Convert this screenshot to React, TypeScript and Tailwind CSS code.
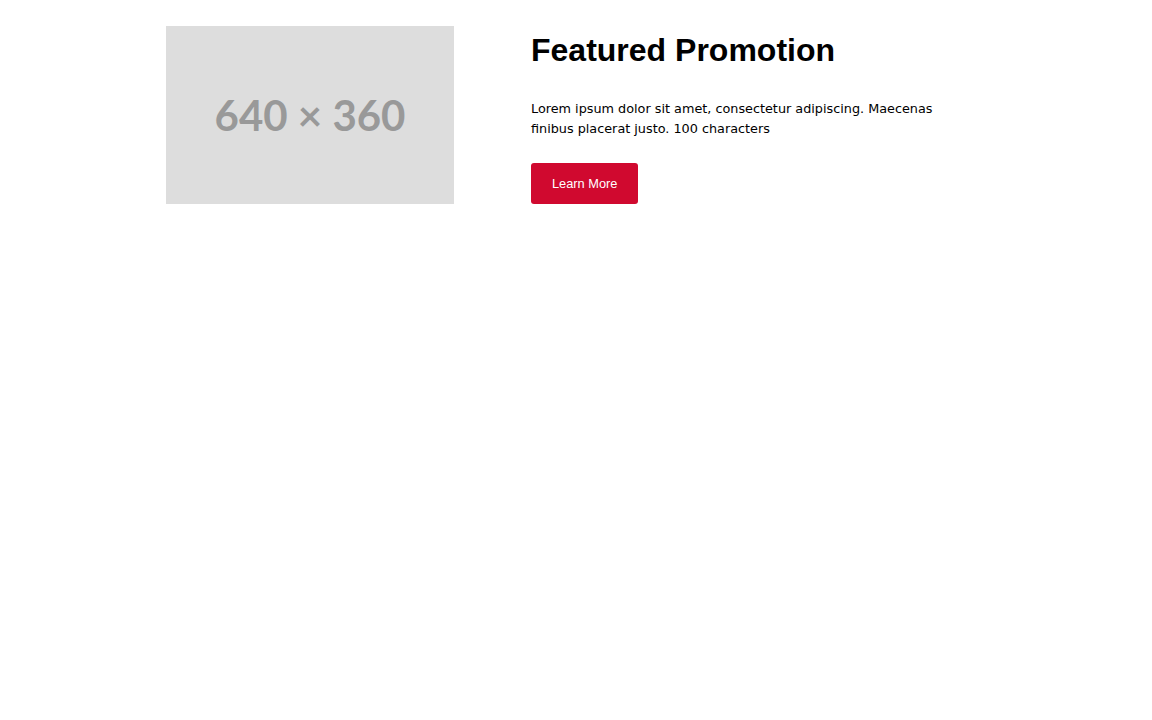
export default function App() {
  return (
    <div className="min-h-[720px] w-full bg-white">
      <div className="mx-auto flex w-[820px] items-start pt-[26px]">
        {/* Placeholder image */}
        <div className="flex h-[178px] w-[288px] shrink-0 items-center justify-center bg-[#dddddd]">
          <span className="font-['Lato','Liberation_Sans',sans-serif] text-[42px] font-bold text-[#999999]">
            640 × 360
          </span>
        </div>

        {/* Promo copy */}
        <div className="ml-[77px] flex w-[455px] flex-col">
          <h2 className="mt-[5px] font-['Liberation_Sans',Arial,sans-serif] text-[32px] font-bold leading-[38px] text-black">
            Featured Promotion
          </h2>
          <p className="mt-[30px] w-[420px] font-['DejaVu_Sans',sans-serif] text-[12.8px] leading-[20px] text-black">
            Lorem ipsum dolor sit amet, consectetur adipiscing. Maecenas finibus placerat justo. 100 characters
          </p>
          <div className="mt-[24px]">
            <button className="h-[41px] rounded-[3px] bg-[#d0092f] px-[21px] font-['Liberation_Sans',Arial,sans-serif] text-[12.8px] text-white">
              Learn More
            </button>
          </div>
        </div>
      </div>
    </div>
  )
}
